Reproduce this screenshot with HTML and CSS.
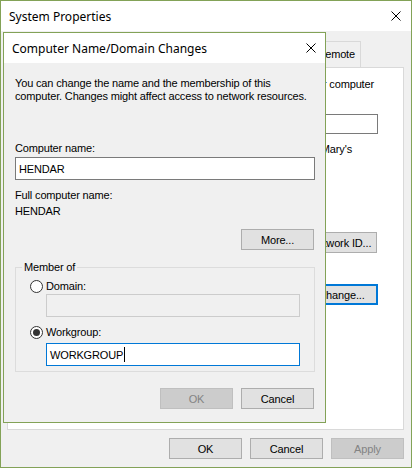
FILE: index.html
```html
<!DOCTYPE html>
<html lang="en">
<head>
<meta charset="UTF-8">
<title>System Properties</title>
<link rel="stylesheet" href="styles.css">
</head>
<body>
	<div class="window main">
		<div class="titlebar">
			<span class="caption">System Properties</span>
			<svg class="close" width="10" height="10" viewBox="0 0 10 10"><path d="M0.5 0.5L9.5 9.5M9.5 0.5L0.5 9.5" stroke="#000" stroke-width="1"/></svg>
		</div>
		<div class="client">
			<div class="tabs">
				<span class="tab">Remote</span>
			</div>
			<div class="panel">
				<p class="line top">your computer</p>
				<span class="box"></span>
				<p class="line hint">"Mary's</p>
				<span class="btn net">Network ID...</span>
				<span class="btn focus">Change...</span>
			</div>
			<div class="buttons">
				<span class="btn">OK</span>
				<span class="btn">Cancel</span>
				<span class="btn off">Apply</span>
			</div>
		</div>

		<div class="window dialog">
			<div class="titlebar">
				<span class="caption">Computer Name/Domain Changes</span>
				<svg class="close" width="10" height="10" viewBox="0 0 10 10"><path d="M0.5 0.5L9.5 9.5M9.5 0.5L0.5 9.5" stroke="#000" stroke-width="1"/></svg>
			</div>
			<div class="content">
				<p class="intro">You can change the name and the membership of this<br>computer. Changes might affect access to network resources.</p>
				<label class="lbl">Computer name:</label>
				<div class="input">HENDAR</div>
				<label class="lbl full">Full computer name:</label>
				<span class="value">HENDAR</span>
				<div class="more"><span class="btn">More...</span></div>
				<fieldset class="group">
					<legend>Member of</legend>
					<div class="radio"><span class="dot"></span>Domain:</div>
					<div class="input sub off domain"></div>
					<div class="radio on work"><span class="dot"></span>Workgroup:</div>
					<div class="input sub active wg">WORKGROUP<span class="caret"></span></div>
				</fieldset>
				<div class="actions">
					<span class="btn off">OK</span>
					<span class="btn">Cancel</span>
				</div>
			</div>
		</div>
	</div>
</body>
</html>
```

FILE: styles.css
```css
body{
	margin:0;
	background:#fff;
	font-family:"Liberation Sans",Arial,sans-serif;
	font-size:11px;
	letter-spacing:-0.15px;
	color:#000;
}
p{
	margin:0;
}
.window{
	border:1px solid #83a257;
	background:#f0f0f0;
	box-sizing:border-box;
	display:flex;
	flex-direction:column;
}
.main{
	width:412px;
	height:468px;
	position:relative;
}
.titlebar{
	height:30px;
	background:#fff;
	display:flex;
	align-items:center;
	justify-content:space-between;
	flex-shrink:0;
}
.caption{
	font-family:"Noto Sans","Open Sans",sans-serif;
	font-size:12px;
	letter-spacing:0;
}
.main > .titlebar{
	padding:0 10px 0 8px;
}
.client{
	flex:1;
	display:flex;
	flex-direction:column;
	padding:9px 7px 0 6px;
}
.tabs{
	display:flex;
	justify-content:flex-end;
	padding-right:43px;
	height:27px;
	align-items:flex-end;
}
.tab{
	height:26px;
	box-sizing:border-box;
	border:1px solid #d9d9d9;
	border-bottom:none;
	padding:6px 5px 0 6px;
	white-space:nowrap;
}
.panel{
	height:363px;
	box-sizing:border-box;
	background:#fff;
	border:1px solid #d9d9d9;
	overflow:hidden;
	padding:10px 25px 0 10px;
	display:flex;
	flex-direction:column;
	align-items:flex-end;
}
.line{
	white-space:nowrap;
	line-height:13px;
}
.line.top{
	padding-right:4px;
}
.box{
	width:250px;
	height:18px;
	border:1px solid #7a7a7a;
	background:#fff;
	margin-top:23px;
}
.hint{
	margin-top:9px;
	padding-right:26px;
}
.btn{
	width:73px;
	height:21px;
	box-sizing:border-box;
	border:1px solid #adadad;
	background:#e1e1e1;
	display:flex;
	align-items:center;
	justify-content:center;
	flex-shrink:0;
}
.btn.net{
	margin-top:76px;
	margin-right:1px;
}
.btn.focus{
	border:2px solid #0078d7;
	margin-top:31px;
}
.btn.off{
	background:#cccccc;
	border-color:#bfbfbf;
	color:#838383;
}
.buttons{
	display:flex;
	justify-content:flex-end;
	gap:8px;
	margin-top:8px;
}
.dialog{
	position:absolute;
	left:2px;
	top:31px;
	width:323px;
	height:391px;
}
.dialog .titlebar{
	padding:0 9px 0 8px;
}
.content{
	padding:14px 10px 0 11px;
	display:flex;
	flex-direction:column;
}
.intro{
	line-height:13px;
	white-space:nowrap;
}
.lbl{
	margin-top:39px;
	line-height:13px;
}
.input{
	height:23px;
	box-sizing:border-box;
	border:1px solid #7a7a7a;
	background:#fff;
	padding:0 3px;
	display:flex;
	align-items:center;
	margin-top:2px;
}
.lbl.full{
	margin-top:9px;
}
.value{
	margin-top:3px;
	line-height:13px;
}
.more{
	display:flex;
	justify-content:flex-end;
	margin-top:11px;
	padding-right:1px;
}
.group{
	margin:11px 0 0;
	height:111px;
	box-sizing:border-box;
	border:1px solid #dcdcdc;
	padding:5px 14px 0 14px;
	display:flex;
	flex-direction:column;
	min-width:0;
}
.group legend{
	padding:0 2px;
	margin-left:-8px;
	line-height:13px;
}
.radio{
	display:flex;
	align-items:center;
	gap:3px;
	height:14px;
}
.dot{
	width:13px;
	height:13px;
	box-sizing:border-box;
	border:1px solid #333;
	border-radius:50%;
	background:#fff;
	display:flex;
	align-items:center;
	justify-content:center;
}
.radio.on .dot::after{
	content:"";
	width:7px;
	height:7px;
	border-radius:50%;
	background:#333;
}
.input.sub{
	margin-left:16px;
	width:254px;
}
.input.domain{
	margin-top:1px;
}
.radio.work{
	margin-top:8px;
}
.input.wg{
	margin-top:4px;
}
.input.off{
	border-color:#cccccc;
	background:#f0f0f0;
}
.input.active{
	border-color:#0078d7;
}
.caret{
	width:1px;
	height:15px;
	background:#000;
	margin-left:1px;
}
.actions{
	display:flex;
	justify-content:flex-end;
	gap:8px;
	margin-top:16px;
	padding-right:1px;
}
```
